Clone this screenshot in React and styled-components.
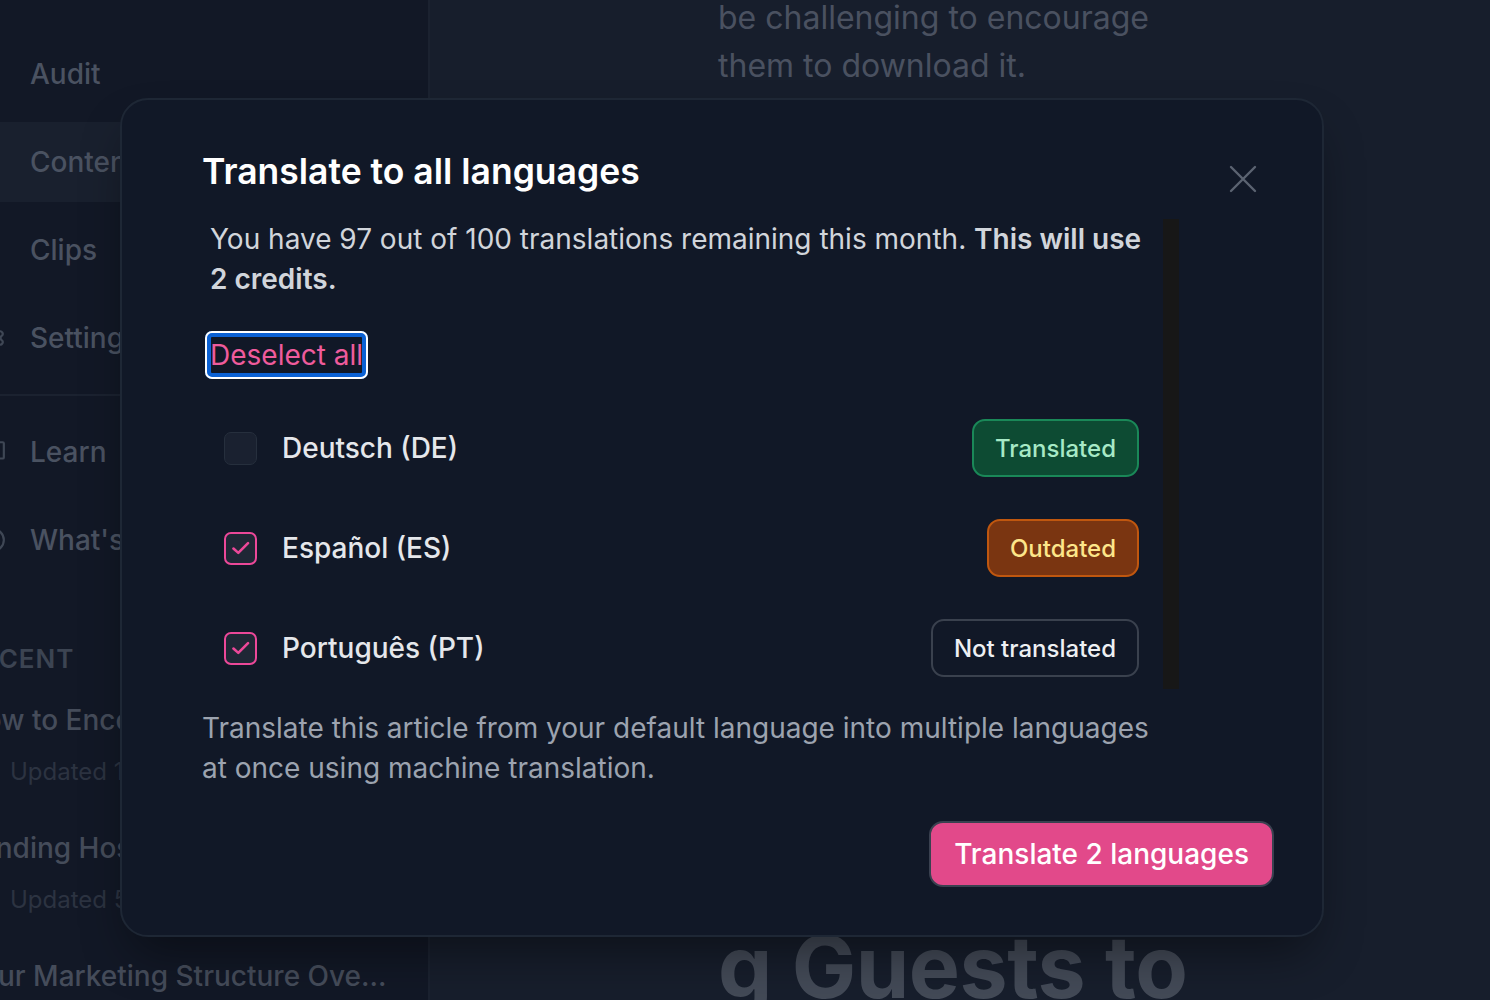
import React from "react";
import styled, { createGlobalStyle } from "styled-components";
import { ChevronRight, Settings, BookOpen, Info } from "lucide-react";

const GlobalStyle = createGlobalStyle`
  html, body {
    margin: 0;
    padding: 0;
    background: #171e2c;
  }
  body {
    font-family: Inter, "Noto Sans", sans-serif;
    overflow: hidden;
  }
  * {
    box-sizing: border-box;
  }
`;

const Page = styled.div`
  position: relative;
  display: flex;
  width: 1490px;
  height: 1000px;
  overflow: hidden;
  background: #171e2c;
`;

const Sidebar = styled.aside`
  width: 430px;
  flex-shrink: 0;
  background: #121826;
  border-right: 2px solid #1b2230;
  overflow: hidden;
  padding-top: 34px;
`;

const NavGroup = styled.div`
  display: flex;
  flex-direction: column;
  gap: 8px;
`;

const NavItem = styled.div`
  height: 80px;
  display: flex;
  align-items: center;
  gap: 24px;
  font-size: 28px;
  font-weight: 500;
  color: #4a5261;
  white-space: nowrap;
  background: ${(p) => (p.active ? "#19202e" : "transparent")};
`;

const IconSlot = styled.span`
  width: 28px;
  height: 28px;
  margin-left: -22px;
  display: flex;
  align-items: center;
  justify-content: flex-end;
  color: #3f4755;
`;

const Divider = styled.div`
  height: 2px;
  background: #1b2230;
  margin: 16px 0;
`;

const Recent = styled.div`
  margin: 61px 0 0 -36px;
`;

const RecentLabel = styled.div`
  font-size: 26px;
  line-height: 36px;
  font-weight: 600;
  letter-spacing: 1px;
  color: #3c4452;
  text-transform: uppercase;
`;

const RecentList = styled.div`
  margin-top: 23px;
  display: flex;
  flex-direction: column;
  gap: 40px;
`;

const RecentTitle = styled.div`
  width: 423px;
  font-size: 28px;
  line-height: 40px;
  font-weight: 500;
  color: #454c5a;
  white-space: nowrap;
  overflow: hidden;
  text-overflow: ellipsis;
`;

const RecentMeta = styled.div`
  margin-top: 16px;
  padding-left: 46px;
  font-size: 24px;
  line-height: 32px;
  color: #2c3341;
  white-space: nowrap;
`;

const Main = styled.main`
  flex: 1;
  padding-left: 288px;
`;

const Paragraph = styled.p`
  margin: -6px 0 0;
  max-width: 460px;
  font-size: 32px;
  line-height: 48px;
  color: #4a5160;
`;

const BigHeading = styled.h1`
  margin: 826px 0 0;
  font-size: 86px;
  line-height: 1.2;
  font-weight: 700;
  letter-spacing: -0.5px;
  color: #434a57;
  white-space: nowrap;
`;

const Modal = styled.div`
  position: absolute;
  left: 120px;
  top: 98px;
  width: 1204px;
  height: 839px;
  display: flex;
  flex-direction: column;
  padding: 48px 48px 48px 80px;
  background: #111827;
  border: 2px solid #1e2735;
  border-radius: 28px;
  box-shadow: 0 25px 50px -12px rgba(0, 0, 0, 0.45);
`;

const Header = styled.div`
  display: flex;
  justify-content: space-between;
  align-items: flex-start;
`;

const Title = styled.h2`
  margin: 4px 0 0;
  font-size: 35.5px;
  line-height: 40px;
  font-weight: 600;
  color: #ffffff;
`;

const CloseButton = styled.button`
  width: 40px;
  height: 40px;
  margin: 11px 11px 0 0;
  padding: 0;
  border: none;
  background: none;
  display: flex;
  align-items: center;
  justify-content: center;
  color: #5b6371;
`;

const ScrollArea = styled.div`
  display: flex;
  width: 978px;
  height: 486px;
  margin-top: 12px;
`;

const ScrollContent = styled.div`
  flex: 1;
  padding: 8px 24px 8px 8px;
`;

const Track = styled.div`
  width: 16px;
  margin: 8px 1px 8px 0;
  background: #171717;
`;

const Intro = styled.p`
  margin: 0 -12px 0 0;
  font-size: 28px;
  line-height: 40px;
  color: #d1d5db;

  & strong {
    font-weight: 600;
  }
`;

const LinkButton = styled.button`
  display: block;
  margin: 32px 0 0 -5px;
  height: 48px;
  padding: 0 5px;
  border: none;
  border-radius: 7px;
  background: transparent;
  font-family: inherit;
  font-size: 28px;
  line-height: 40px;
  color: #ef5b9c;
  box-shadow: inset 0 0 0 2px #ffffff, inset 0 0 0 6px #0b61d4;
`;

const LangList = styled.div`
  margin-top: 40px;
  display: flex;
  flex-direction: column;
  gap: 42px;
`;

const LangRow = styled.div`
  height: 58px;
  display: flex;
  align-items: center;
  padding-left: 14px;
`;

const Checkbox = styled.span`
  width: 33px;
  height: 33px;
  flex-shrink: 0;
  display: flex;
  align-items: center;
  justify-content: center;
  border-radius: 7px;
  border: ${(p) => (p.checked ? "2px solid #ec4899" : "1.5px solid #262f3d")};
  background: ${(p) => (p.checked ? "#1f2735" : "#1a2130")};
`;

const LangName = styled.span`
  flex: 1;
  margin-left: 25px;
  font-size: 28px;
  line-height: 40px;
  font-weight: 500;
  color: #e5e7eb;
`;

const badgeColors = {
  done: { bg: "#0d4b33", border: "#1a8858", text: "#a7e9c6" },
  old: { bg: "#7a3511", border: "#c0570f", text: "#fde68a" },
  none: { bg: "transparent", border: "#3a414e", text: "#eef0f3" },
};

const Badge = styled.span`
  height: 58px;
  padding: 0 21px;
  display: flex;
  align-items: center;
  border-radius: 13px;
  font-size: 24px;
  font-weight: 500;
  background: ${(p) => badgeColors[p.kind].bg};
  border: 2px solid ${(p) => badgeColors[p.kind].border};
  color: ${(p) => badgeColors[p.kind].text};
`;

const Note = styled.p`
  margin: 11px 0 0;
  max-width: 966px;
  font-size: 28px;
  line-height: 40px;
  color: #9ca3af;
`;

const Footer = styled.div`
  margin-top: auto;
  display: flex;
  justify-content: flex-end;
`;

const PrimaryButton = styled.button`
  height: 66px;
  padding: 0 23px;
  border: 2px solid #3a4150;
  border-radius: 14px;
  background: #e2498a;
  font-family: inherit;
  font-size: 28px;
  font-weight: 500;
  color: #ffffff;
`;

const navTop = [
  { label: "Audit" },
  { label: "Content", active: true },
  { label: "Clips", icon: ChevronRight },
  { label: "Settings", icon: Settings },
];

const navBottom = [
  { label: "Learn", icon: BookOpen },
  { label: "What's new", icon: Info },
];

const recent = [
  { title: "How to Encourage Guests to Download", meta: "Updated 1 day ago" },
  { title: "Landing Hosting Success Stories", meta: "Updated 5 days ago" },
  { title: "Your Marketing Structure Overview", meta: "" },
];

const languages = [
  { name: "Deutsch (DE)", checked: false, status: "done", text: "Translated" },
  { name: "Español (ES)", checked: true, status: "old", text: "Outdated" },
  { name: "Português (PT)", checked: true, status: "none", text: "Not translated" },
];

function Nav({ items }) {
  return (
    <NavGroup>
      {items.map((item) => {
        const Icon = item.icon;
        return (
          <NavItem key={item.label} active={item.active}>
            <IconSlot>{Icon && <Icon size={26} strokeWidth={2} />}</IconSlot>
            {item.label}
          </NavItem>
        );
      })}
    </NavGroup>
  );
}

function CheckMark() {
  return (
    <svg width="26" height="26" viewBox="0 0 24 24" fill="none">
      <polyline
        points="5 12.5 9.5 16.5 18.5 7.5"
        stroke="#ec4899"
        strokeWidth="2.4"
        strokeLinecap="round"
        strokeLinejoin="round"
      />
    </svg>
  );
}

export default function App() {
  return (
    <Page>
      <GlobalStyle />
      <Sidebar>
        <Nav items={navTop} />
        <Divider />
        <Nav items={navBottom} />
        <Recent>
          <RecentLabel>Recent</RecentLabel>
          <RecentList>
            {recent.map((r) => (
              <div key={r.title}>
                <RecentTitle>{r.title}</RecentTitle>
                {r.meta && <RecentMeta>{r.meta}</RecentMeta>}
              </div>
            ))}
          </RecentList>
        </Recent>
      </Sidebar>
      <Main>
        <Paragraph>be challenging to encourage them to download it.</Paragraph>
        <BigHeading>g Guests to</BigHeading>
      </Main>

      <Modal>
        <Header>
          <Title>Translate to all languages</Title>
          <CloseButton aria-label="Close">
            <svg width="28" height="28" viewBox="0 0 28 28">
              <path d="M2 2L26 26M26 2L2 26" stroke="currentColor" strokeWidth="2.4" strokeLinecap="round" />
            </svg>
          </CloseButton>
        </Header>
        <ScrollArea>
          <ScrollContent>
            <Intro>
              You have 97 out of 100 translations remaining this month.{" "}
              <strong>This will use 2 credits.</strong>
            </Intro>
            <LinkButton>Deselect all</LinkButton>
            <LangList>
              {languages.map((l) => (
                <LangRow key={l.name}>
                  <Checkbox checked={l.checked}>{l.checked && <CheckMark />}</Checkbox>
                  <LangName>{l.name}</LangName>
                  <Badge kind={l.status}>{l.text}</Badge>
                </LangRow>
              ))}
            </LangList>
          </ScrollContent>
          <Track />
        </ScrollArea>
        <Note>
          Translate this article from your default language into multiple languages at once using
          machine translation.
        </Note>
        <Footer>
          <PrimaryButton>Translate 2 languages</PrimaryButton>
        </Footer>
      </Modal>
    </Page>
  );
}
